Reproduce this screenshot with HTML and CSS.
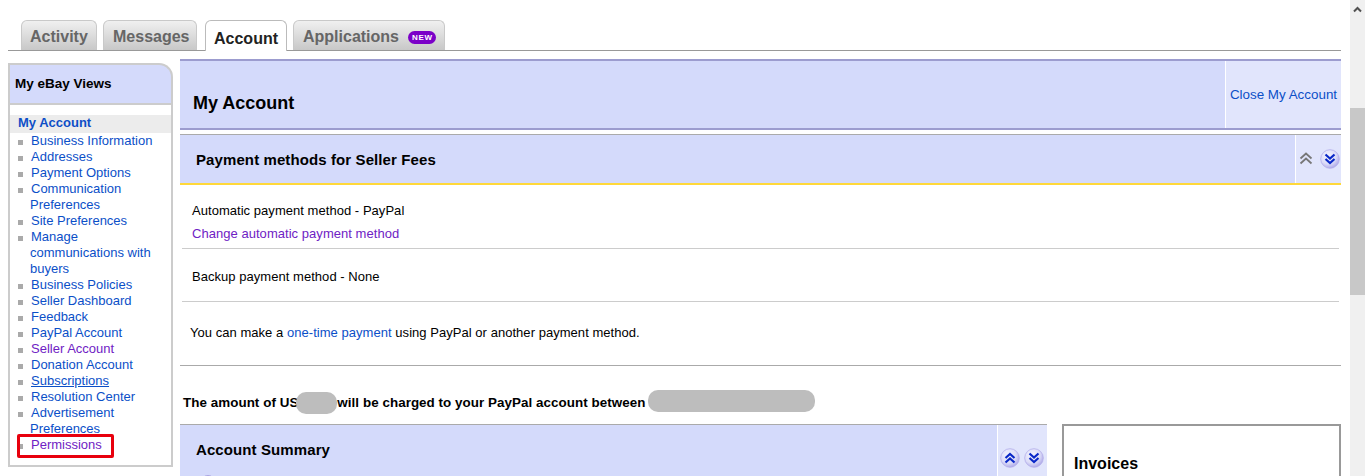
FILE: index.html
```html
<!DOCTYPE html>
<html lang="en">
<head>
<meta charset="utf-8">
<title>My Account</title>
<link rel="stylesheet" href="styles.css">
</head>
<body>
<svg class="defs" width="0" height="0" aria-hidden="true">
  <defs>
    <radialGradient id="ball" cx="40%" cy="35%" r="70%">
      <stop offset="0" stop-color="#f6f6ff"/>
      <stop offset=".6" stop-color="#dcdcf8"/>
      <stop offset="1" stop-color="#a8a2e6"/>
    </radialGradient>
  </defs>
</svg>
<div class="page">
  <div class="content">
    <nav class="tabs">
      <a class="tab t1">Activity</a>
      <a class="tab t2">Messages</a>
      <a class="tab t3 active">Account</a>
      <a class="tab t4">Applications <span class="new">NEW</span></a>
    </nav>
    <div class="columns">
      <aside class="side">
        <div class="side-head">My eBay Views</div>
        <div class="side-body">
          <div class="side-title">My Account</div>
          <ul class="menu">
            <li><a>Business Information</a></li>
            <li><a>Addresses</a></li>
            <li><a>Payment Options</a></li>
            <li><a>Communication<br>Preferences</a></li>
            <li><a>Site Preferences</a></li>
            <li><a>Manage<br>communications with<br>buyers</a></li>
            <li><a>Business Policies</a></li>
            <li><a>Seller Dashboard</a></li>
            <li><a>Feedback</a></li>
            <li><a>PayPal Account</a></li>
            <li><a class="visited">Seller Account</a></li>
            <li><a>Donation Account</a></li>
            <li><a class="under">Subscriptions</a></li>
            <li><a>Resolution Center</a></li>
            <li><a>Advertisement<br>Preferences</a></li>
            <li class="perm"><a class="visited">Permissions</a><span class="redbox"></span></li>
          </ul>
        </div>
      </aside>
      <main class="main">
        <header class="title-band">
          <h1>My Account</h1>
          <a class="close">Close My Account</a>
        </header>
        <section class="sec-head">
          <h2>Payment methods for Seller Fees</h2>
          <div class="sec-icons">
            <svg class="ic" width="20" height="20" viewBox="0 0 20 20"><path d="M4.500 9.500l5.500-5 5.500 5M4.500 14.500l5.500-5 5.500 5" fill="none" stroke="#777" stroke-width="1.800"/></svg>
            <svg class="ic" width="20" height="20" viewBox="0 0 20 20"><circle cx="10" cy="10" r="9.300" fill="url(#ball)" stroke="#b4aeea" stroke-width=".8"/><path d="M5.500 5.500l4.500 4 4.500-4M5.500 10l4.500 4 4.500-4" fill="none" stroke="#0a28c8" stroke-width="2.200"/></svg>
          </div>
        </section>
        <div class="row row-auto">
          <p>Automatic payment method - PayPal</p>
          <a class="visited">Change automatic payment method</a>
        </div>
        <div class="row row-backup"><p>Backup payment method - None</p></div>
        <div class="row row-once"><p>You can make a <a class="link">one-time payment</a> using PayPal or another payment method.</p></div>
        <p class="amount">The amount of US<span class="blur b1"></span>will be charged to your PayPal account between<span class="blur b2"></span></p>
        <div class="lower">
          <section class="summary">
            <div class="summary-head">
              <h2>Account Summary</h2>
              <span class="stub"></span>
            </div>
            <div class="sec-icons two">
              <svg class="ic" width="20" height="20" viewBox="0 0 20 20"><circle cx="10" cy="10" r="9.300" fill="url(#ball)" stroke="#b4aeea" stroke-width=".8"/><path d="M5.500 10l4.500-4 4.500 4M5.500 14.500l4.500-4 4.500 4" fill="none" stroke="#0a28c8" stroke-width="2.200"/></svg>
              <svg class="ic" width="20" height="20" viewBox="0 0 20 20"><circle cx="10" cy="10" r="9.300" fill="url(#ball)" stroke="#b4aeea" stroke-width=".8"/><path d="M5.500 5.500l4.500 4 4.500-4M5.500 10l4.500 4 4.500-4" fill="none" stroke="#0a28c8" stroke-width="2.200"/></svg>
            </div>
          </section>
          <section class="invoices"><h2>Invoices</h2></section>
        </div>
      </main>
    </div>
  </div>
  <div class="scrollbar">
    <svg class="sb-arrow" width="15" height="18" viewBox="0 0 15 18"><path d="M4 11.500l3.500-3.500 3.500 3.500" fill="none" stroke="#505050" stroke-width="2"/></svg>
    <div class="thumb"></div>
  </div>
</div>
</body>
</html>
```
FILE: styles.css
```css
html, body { margin: 0; padding: 0; height: 476px; overflow: hidden; background: #fff; }
body { font-family: "Liberation Sans", Arial, sans-serif; font-size: 13px; color: #000; }
p, h1, h2, ul { margin: 0; padding: 0; }
.defs { position: absolute; }
.page { display: flex; height: 476px; overflow: hidden; }
.content { width: 1341px; padding-left: 8px; box-sizing: border-box; flex: none; }
.scrollbar { width: 15px; margin-left: 9px; background: #f0f0f0; flex: none; box-sizing: border-box; }
.sb-arrow { display: block; }
.thumb { height: 187px; margin-top: 90px; background: #c8c8c8; }

.tabs { display: flex; align-items: flex-end; height: 51px; box-sizing: border-box; border-bottom: 1px solid #999; padding-left: 13px; }
.tab { height: 30px; box-sizing: border-box; border: 1px solid #c9c9c9; border-bottom: 0; border-radius: 6px 6px 0 0; background: linear-gradient(#f0f0f0, #c8c8c8); color: #666; font-weight: bold; font-size: 16px; line-height: 31px; white-space: nowrap; }
.t1 { width: 76px; margin-right: 6px; padding-left: 8px; }
.t2 { width: 94px; margin-right: 8px; padding-left: 9px; }
.t3 { width: 82px; margin-right: 6px; height: 31px; margin-bottom: -1px; padding-left: 8px; background: #fff; color: #222; border-color: #bbb; line-height: 36px; }
.t4 { width: 152px; padding-left: 9px; }
.new { display: inline-block; width: 28px; height: 13px; margin-left: 5px; border-radius: 7px; background: #7b00c8; color: #fff; font-size: 8px; line-height: 13px; letter-spacing: .8px; text-align: center; vertical-align: 2px; }

.columns { display: flex; align-items: flex-start; }
.side { width: 165px; margin-top: 12px; flex: none; }
.side-head { height: 40px; box-sizing: border-box; border: 2px solid #ccc; border-bottom: 0; border-radius: 0 14px 0 0; background: #d4dafb; font-weight: bold; font-size: 13.500px; line-height: 38px; padding-left: 5px; }
.side-body { border: 2px solid #ccc; padding: 10px 0 12px; }
.side-title { height: 18px; background: #ececec; color: #0e4fc7; font-weight: bold; font-size: 13px; line-height: 16px; padding-left: 8px; }
.menu { list-style: none; font-size: 13px; line-height: 16px; }
.menu li { position: relative; padding-left: 20px; text-indent: 1px; }
.menu li::before { content: ""; position: absolute; left: 8px; top: 7px; width: 5px; height: 5px; background: #aaa; }
.menu a { color: #0b4fc8; }
.menu a.visited { color: #6f22c4; }
.menu a.under { text-decoration: underline; }
.redbox { position: absolute; left: 7px; top: -3px; width: 97px; height: 24px; box-sizing: border-box; border: 3px solid #e8000d; border-radius: 2px; }

.main { width: 1161px; margin-left: 7px; margin-top: 8px; flex: none; }
.title-band { display: flex; height: 71px; box-sizing: border-box; border-top: 2px solid #9c9ccf; border-bottom: 2px solid #9c9ccf; background: #d4dafb; }
.title-band h1 { flex: 1; font-size: 18px; line-height: 84px; padding-left: 13px; }
.close { width: 116px; box-sizing: border-box; border-left: 1px solid #fff; background: #e1e5fc; color: #0b4fc8; font-size: 13.400px; line-height: 68px; text-align: center; white-space: nowrap; }
.sec-head { display: flex; margin-top: 4px; height: 51px; box-sizing: border-box; border-top: 1px solid #aaa; border-bottom: 2px solid #ffd83a; background: #d4dafb; }
.sec-head h2 { flex: 1; font-size: 15px; line-height: 49px; padding-left: 16px; letter-spacing: .1px; }
.sec-icons { display: flex; width: 46px; box-sizing: border-box; border-left: 1px solid #fff; background: #e1e5fc; align-items: center; gap: 4px; }
.row { font-size: 13px; letter-spacing: .04px; line-height: 16px; }
.row-auto { height: 64px; box-sizing: border-box; margin: 0 2px; padding: 18px 0 0 10px; border-bottom: 1px solid #ccc; }
.row-auto p { margin-bottom: 7px; }
.row-auto a { color: #6f22c4; display: block; }
.row-backup { height: 53px; box-sizing: border-box; margin: 0 2px; padding: 20px 0 0 10px; border-bottom: 1px solid #ccc; }
.row-once { height: 64px; box-sizing: border-box; padding: 23px 0 0 10px; border-bottom: 1px solid #aaa; }
.link { color: #0b4fc8; }
.amount { height: 58px; box-sizing: border-box; display: flex; align-items: center; padding: 16px 0 0 3px; font-weight: bold; font-size: 13.400px; letter-spacing: .05px; line-height: 16px; white-space: pre; }
.blur { display: inline-block; background: #bdbdbd; border-radius: 10px; height: 22px; }
.b1 { width: 41px; margin-left: -2px; }
.b2 { width: 167px; margin-left: 2px; margin-bottom: 5px; }
.lower { display: flex; align-items: flex-start; }
.summary { position: relative; width: 867px; height: 60px; border-top: 1px solid #aaa; background: #d4dafb; display: flex; }
.summary-head { flex: 1; display: flex; }
.summary h2 { flex: 1; font-size: 15px; line-height: 50px; padding-left: 16px; letter-spacing: .1px; }
.stub { position: absolute; left: 20px; top: 50px; width: 14px; height: 14px; border-radius: 50%; background: #e8e8fb; border: 1px solid #a9a4e0; }
.two { width: 50px; height: 60px; padding: 23px 0 0 2px; align-items: flex-start; }
.invoices { width: 279px; height: 60px; margin-left: 15px; box-sizing: border-box; border: 2px solid #999; border-bottom: 0; }
.invoices h2 { font-size: 16px; line-height: 20px; padding: 28px 0 0 10px; }
```
